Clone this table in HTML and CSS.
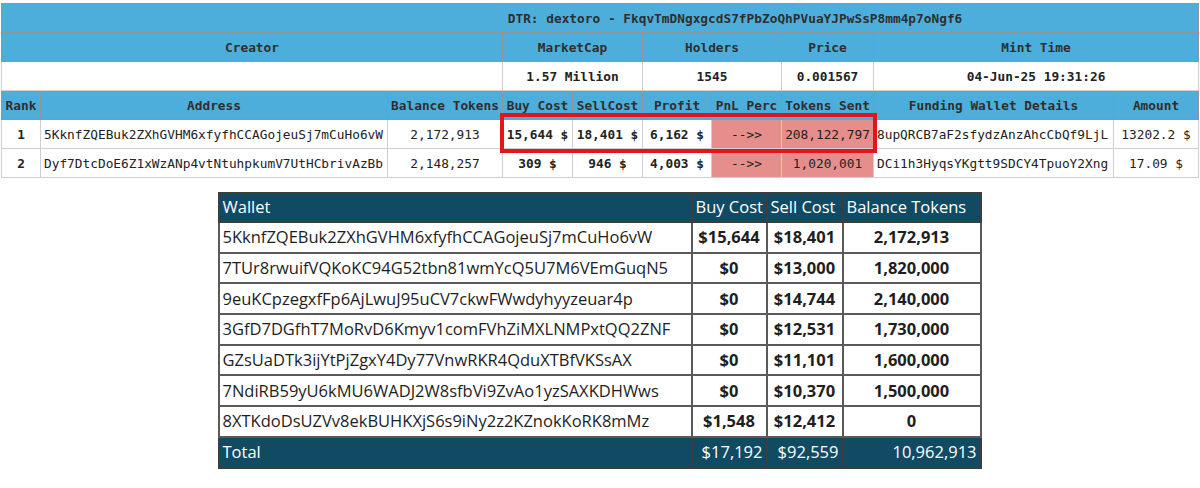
FILE: index.html
```html
<!DOCTYPE html>
<html>
<head>
<meta charset="utf-8">
<link rel="stylesheet" href="styles.css">
</head>
<body>
<div class="page">
  <table class="dtr">
    <colgroup>
      <col class="c-rank"><col class="c-addr"><col class="c-bal"><col class="c-buy"><col class="c-sell">
      <col class="c-profit"><col class="c-pnl"><col class="c-sent"><col class="c-fund"><col class="c-amt">
    </colgroup>
    <tr class="title"><th colspan="10">DTR: dextoro - FkqvTmDNgxgcdS7fPbZoQhPVuaYJPwSsP8mm4p7oNgf6</th></tr>
    <tr><th colspan="3">Creator</th><th colspan="2">MarketCap</th><th colspan="2">Holders</th><th>Price</th><th colspan="2">Mint Time</th></tr>
    <tr class="vals"><td colspan="3"></td><td colspan="2">1.57 Million</td><td colspan="2">1545</td><td>0.001567</td><td colspan="2">04-Jun-25 19:31:26</td></tr>
    <tr><th>Rank</th><th>Address</th><th>Balance Tokens</th><th>Buy Cost</th><th>SellCost</th><th>Profit</th><th>PnL Perc</th><th>Tokens Sent</th><th>Funding Wallet Details</th><th>Amount</th></tr>
    <tr>
      <td class="b">1</td><td class="left">5KknfZQEBuk2ZXhGVHM6xfyfhCCAGojeuSj7mCuHo6vW</td><td>2,172,913</td>
      <td class="b">15,644 $</td><td class="b">18,401 $</td><td class="b">6,162 $</td>
      <td class="pink">--&gt;&gt;</td><td class="pink">208,122,797</td>
      <td class="left">8upQRCB7aF2sfydzAnzAhcCbQf9LjL</td><td>13202.2 $</td>
    </tr>
    <tr>
      <td class="b">2</td><td class="left">Dyf7DtcDoE6Z1xWzANp4vtNtuhpkumV7UtHCbrivAzBb</td><td>2,148,257</td>
      <td class="b">309 $</td><td class="b">946 $</td><td class="b">4,003 $</td>
      <td class="pink">--&gt;&gt;</td><td class="pink">1,020,001</td>
      <td class="left">DCi1h3HyqsYKgtt9SDCY4TpuoY2Xng</td><td>17.09 $</td>
    </tr>
  </table>
  <div class="highlight"></div>

  <table class="wallets">
    <colgroup><col class="w-wallet"><col class="w-buy"><col class="w-sell"><col class="w-bal"></colgroup>
    <tr class="whead"><th>Wallet</th><th>Buy Cost</th><th>Sell Cost</th><th>Balance Tokens</th></tr>
    <tr><td>5KknfZQEBuk2ZXhGVHM6xfyfhCCAGojeuSj7mCuHo6vW</td><td class="num">$15,644</td><td class="num">$18,401</td><td class="num">2,172,913</td></tr>
    <tr><td>7TUr8rwuifVQKoKC94G52tbn81wmYcQ5U7M6VEmGuqN5</td><td class="num">$0</td><td class="num">$13,000</td><td class="num">1,820,000</td></tr>
    <tr><td>9euKCpzegxfFp6AjLwuJ95uCV7ckwFWwdyhyyzeuar4p</td><td class="num">$0</td><td class="num">$14,744</td><td class="num">2,140,000</td></tr>
    <tr><td>3GfD7DGfhT7MoRvD6Kmyv1comFVhZiMXLNMPxtQQ2ZNF</td><td class="num">$0</td><td class="num">$12,531</td><td class="num">1,730,000</td></tr>
    <tr><td>GZsUaDTk3ijYtPjZgxY4Dy77VnwRKR4QduXTBfVKSsAX</td><td class="num">$0</td><td class="num">$11,101</td><td class="num">1,600,000</td></tr>
    <tr><td>7NdiRB59yU6kMU6WADJ2W8sfbVi9ZvAo1yzSAXKDHWws</td><td class="num">$0</td><td class="num">$10,370</td><td class="num">1,500,000</td></tr>
    <tr><td>8XTKdoDsUZVv8ekBUHKXjS6s9iNy2z2KZnokKoRK8mMz</td><td class="num">$1,548</td><td class="num">$12,412</td><td class="num">0</td></tr>
    <tr class="total"><td>Total</td><td class="tnum">$17,192</td><td class="tnum">$92,559</td><td class="tnum">10,962,913</td></tr>
  </table>
</div>
</body>
</html>
```

FILE: styles.css
```css
body {
  margin: 0;
  background: #ffffff;
  font-family: "DejaVu Sans Mono", "Liberation Mono", monospace;
}

.page {
  position: relative;
  padding: 3px 2px 0 1px;
}

.dtr {
  width: 1197px;
  table-layout: fixed;
  border-collapse: collapse;
  font-size: 12.8px;
  color: #222222;
}

.c-rank { width: 39px; }
.c-addr { width: 347px; }
.c-bal { width: 115px; }
.c-buy { width: 70px; }
.c-sell { width: 70px; }
.c-profit { width: 69px; }
.c-pnl { width: 70px; }
.c-sent { width: 92px; }
.c-fund { width: 240px; }
.c-amt { width: 85px; }

.dtr th {
  background: #4eaedb;
  border: 1px solid #8f9599;
  color: #2e2e2e;
  font-weight: bold;
  height: 28px;
  padding: 0 2px;
  white-space: nowrap;
  overflow: hidden;
}

.dtr .title th {
  padding-left: 272px;
}

.dtr td {
  border: 1px solid #cfcfcf;
  height: 28px;
  padding: 0 2px;
  text-align: center;
  white-space: nowrap;
  overflow: hidden;
}

.dtr .vals td {
  font-weight: bold;
}

.dtr td.b {
  font-weight: bold;
}

.dtr td.left {
  text-align: left;
  padding-left: 3px;
}

.dtr td.pink {
  background: #e68e8c;
}

.highlight {
  position: absolute;
  left: 500px;
  top: 113px;
  width: 369px;
  height: 32px;
  border: 4px solid #e3141c;
}

.wallets {
  margin: 14px auto 0;
  width: 762px;
  table-layout: fixed;
  border-collapse: collapse;
  font-family: "Open Sans", "Liberation Sans", sans-serif;
  font-size: 16.5px;
  line-height: 1.1;
  color: #1e1e1e;
}

.w-wallet { width: 473px; }
.w-buy { width: 75px; }
.w-sell { width: 76px; }
.w-bal { width: 138px; }

.wallets th {
  background: #114a63;
  color: #ffffff;
  font-weight: normal;
  text-align: left;
  padding: 0 3px;
  height: 27px;
  border: 2px solid #3d3d3d;
  white-space: nowrap;
}

.wallets td {
  border: 2px solid #5a5a5a;
  height: 28.7px;
  padding: 0 3px;
  white-space: nowrap;
  overflow: hidden;
}

.wallets td.num {
  text-align: center;
  font-weight: bold;
}

.wallets .total td {
  background: #114a63;
  color: #ffffff;
  border-color: #3d3d3d;
}

.wallets td.tnum {
  text-align: right;
  padding-right: 3px;
}
```
